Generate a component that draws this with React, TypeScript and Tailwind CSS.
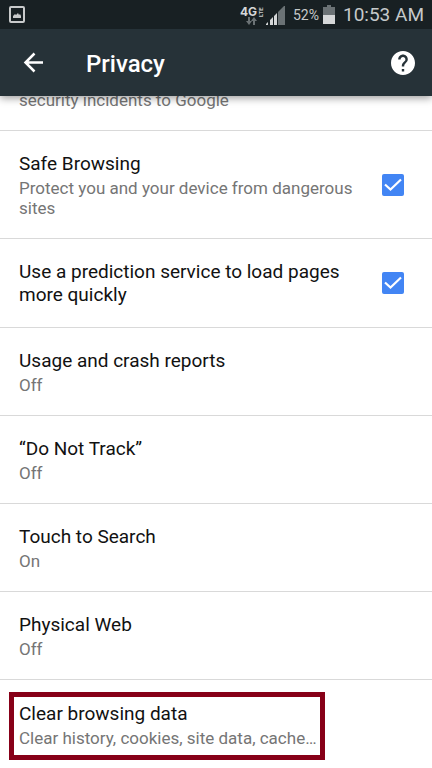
import { useState } from "react";

type Setting = {
    id: string;
    title: string;
    summary?: string;
    toggle?: boolean;
};

const settings: Setting[] = [
    { id: "safe-browsing", title: "Safe Browsing", summary: "Protect you and your device from dangerous sites", toggle: true },
    { id: "prediction", title: "Use a prediction service to load pages more quickly", toggle: true },
    { id: "usage", title: "Usage and crash reports", summary: "Off" },
    { id: "dnt", title: "“Do Not Track”", summary: "Off" },
    { id: "touch-search", title: "Touch to Search", summary: "On" },
    { id: "physical-web", title: "Physical Web", summary: "Off" },
];

function StatusBar() {
    return (
        <div className="flex h-[29px] items-center justify-between bg-[#182023] pr-2 pl-[9px] text-[#c6c9ca]">
            <svg className="h-[17px] w-4" viewBox="0 0 16 17" aria-hidden>
                <rect x="1" y="1" width="14" height="15" rx="1" fill="none" stroke="#c8cacb" strokeWidth="2" />
                <path d="M4 12v-2l2-2 1 1 2-2 1 2 1-1 1 2v2z" fill="#c8cacb" />
            </svg>
            <div className="flex items-center">
                <svg className="mr-0.5 h-6 w-[26px] overflow-visible" viewBox="0 0 26 24" aria-label="4G LTE">
                    <text x="2" y="13" fill="#d5d7d8" fontFamily="Inter, sans-serif" fontSize="12" fontWeight="700">4G</text>
                    <text transform="rotate(-90)" x="-14" y="25" fill="#c6c9ca" fontFamily="Roboto, sans-serif" fontSize="6" fontWeight="700">LTE</text>
                    <path d="M10 14v4H8l3 4 3-4h-2v-4z" fill="#6b7275" />
                    <path d="M15 22v-4h-2l3-4 3 4h-2v4z" fill="#6b7275" />
                </svg>
                <svg className="mr-2 h-5 w-[19px]" viewBox="0 0 19 20" aria-hidden>
                    <path d="M0 20v-1l2-2v3zM4 20v-5l3-3v8zM8 20v-9l3-3v12z" fill="#d5d7d8" />
                    <path d="M12 20V7l6-6h1v19z" fill="#6b7275" />
                </svg>
                <span className="text-sm leading-5">52%</span>
                <svg className="mr-2 ml-1 h-[19px] w-3" viewBox="0 0 12 19" aria-hidden>
                    <path d="M4 0h4v2h4v8H0V2h4z" fill="#6b7275" />
                    <path d="M0 10h12v9H0z" fill="#d5d7d8" />
                </svg>
                <span className="text-[19px] leading-6">10:53 AM</span>
            </div>
        </div>
    );
}

function AppBar() {
    return (
        <div className="flex h-[67px] items-center bg-[#263238] pr-[17px] pl-[22px] text-white">
            <button type="button" aria-label="Back" className="mr-10">
                <svg className="size-6" viewBox="0 0 24 24" fill="none" stroke="currentColor" strokeWidth="2.500" aria-hidden>
                    <path d="M21 11.500H4M12.500 2.500l-9 9 9 9" />
                </svg>
            </button>
            <h1 className="flex-1 pt-0.5 text-2xl leading-7 font-medium">Privacy</h1>
            <button type="button" aria-label="Help">
                <svg className="size-6" viewBox="2 2 20 20" fill="currentColor" aria-hidden>
                    <path d="M12 2C6.480 2 2 6.480 2 12s4.480 10 10 10 10-4.480 10-10S17.520 2 12 2zm1 17h-2v-2h2v2zm2.070-7.750l-.9.920C13.450 12.900 13 13.500 13 15h-2v-.5c0-1.100.45-2.100 1.170-2.830l1.240-1.260c.37-.36.59-.86.59-1.410 0-1.100-.9-2-2-2s-2 .9-2 2H8c0-2.210 1.790-4 4-4s4 1.790 4 4c0 .88-.36 1.680-.93 2.250z" />
                </svg>
            </button>
        </div>
    );
}

function RowText({ title, summary }: { title: string; summary?: string }) {
    return (
        <>
            <span className="block text-[19px] leading-[23px] text-[#111111]">{title}</span>
            {summary && <span className="block pt-[3px] text-[17px] leading-5 text-[#757575]">{summary}</span>}
        </>
    );
}

function ToggleRow({ setting }: { setting: Setting }) {
    const [checked, setChecked] = useState(true);

    return (
        <label
            htmlFor={setting.id}
            className={`flex items-center justify-between gap-6 pt-[21px] pr-7 pl-[19px] ${setting.summary ? "pb-5" : "pb-[21px]"}`}
        >
            <span className="block">
                <RowText title={setting.title} summary={setting.summary} />
            </span>
            <span className="grid shrink-0 place-items-center">
                <input
                    id={setting.id}
                    type="checkbox"
                    checked={checked}
                    onChange={(e) => setChecked(e.target.checked)}
                    className="peer col-start-1 row-start-1 size-[22px] appearance-none rounded-xs border-2 border-[#757575] checked:border-0 checked:bg-[#4285f4]"
                />
                <svg
                    className="pointer-events-none invisible col-start-1 row-start-1 size-[22px] peer-checked:visible"
                    viewBox="0 0 22 22"
                    fill="none"
                    stroke="#fff"
                    strokeWidth="2.200"
                    aria-hidden
                >
                    <path d="M3 10.500l5.500 5L19 5.500" />
                </svg>
            </span>
        </label>
    );
}

export default function App() {
    return (
        <div className="min-h-screen bg-white font-[Roboto,sans-serif]">
            <header className="sticky top-0 z-10 shadow-[0_2px_8px_rgba(0,0,0,0.4)]">
                <StatusBar />
                <AppBar />
            </header>

            {/* the list is scrolled, so its first row runs under the header */}
            <ul className="-mt-1.5">
                <li className="border-b border-[#d9d9d9] pr-7 pb-5 pl-[19px] text-[17px] leading-5 text-[#757575]">
                    security incidents to Google
                </li>
                {settings.map((s) => (
                    <li key={s.id} className="border-b border-[#d9d9d9]">
                        {s.toggle ? (
                            <ToggleRow setting={s} />
                        ) : (
                            <button type="button" className="block w-full pt-[21px] pr-7 pb-5 pl-[19px] text-left">
                                <RowText title={s.title} summary={s.summary} />
                            </button>
                        )}
                    </li>
                ))}
                <li className="px-[9px] pt-3 pb-2">
                    <button type="button" className="block border-5 border-[#870018] pt-[5px] pr-[3px] pb-[7px] pl-[5px] text-left">
                        <RowText title="Clear browsing data" summary="Clear history, cookies, site data, cache…" />
                    </button>
                </li>
            </ul>
        </div>
    );
}
